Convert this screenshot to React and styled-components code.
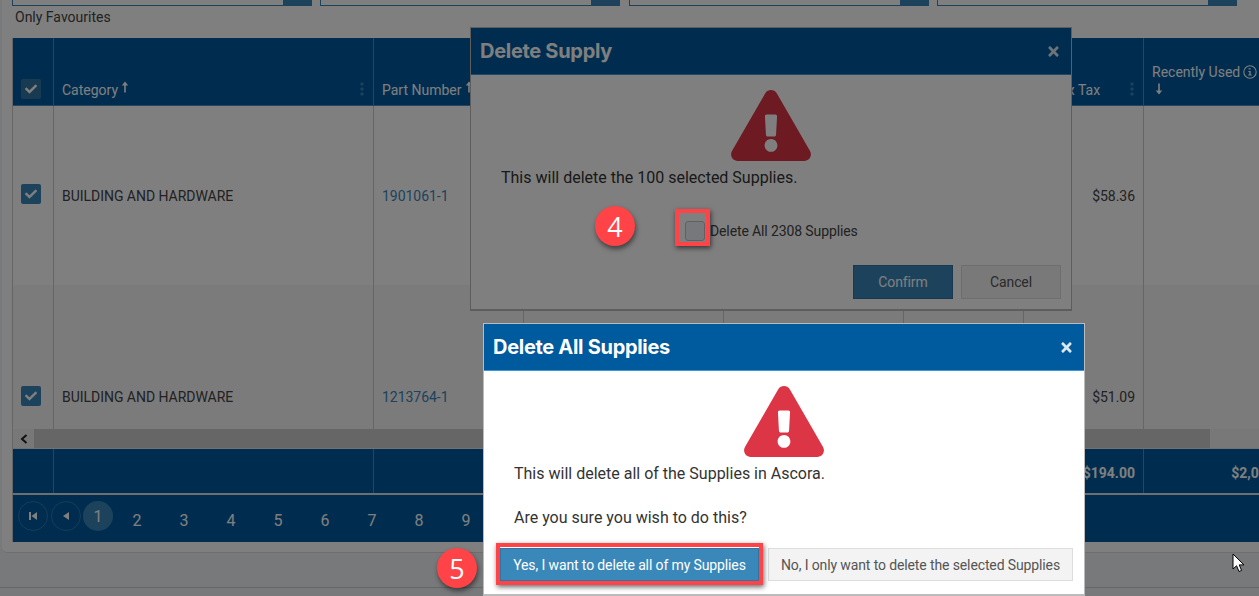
import styled, { createGlobalStyle } from "styled-components";
import { FaExclamationTriangle, FaTimes, FaCheck } from "react-icons/fa";

const COLUMNS = "41px 320px 150px 200px 180px 120px 120px 160px";
const RED = "#ff4346";
const pages = [2, 3, 4, 5, 6, 7, 8, 9];

const GlobalStyle = createGlobalStyle`
  html, body {
    margin: 0;
    padding: 0;
    height: 100%;
    overflow: hidden;
    background: #f0f2f7;
    font-family: Roboto, "Liberation Sans", sans-serif;
    color: #444;
  }
  * { box-sizing: border-box; }
`;

const Stage = styled.div`
  position: relative;
  width: 1259px;
  height: 596px;
  overflow: hidden;
`;

const Panel = styled.main`
  margin-left: 2px;
  height: 553px;
  background: #fff;
  border-bottom: 1px solid #ddd;
  border-bottom-left-radius: 5px;
  padding-left: 10px;
  overflow: hidden;
`;

const BottomBar = styled.div`
  height: 35px;
  border-bottom: 1px solid #ccc;
`;

const Filters = styled.div`
  display: grid;
  grid-template-columns: repeat(4, 1fr);
  gap: 8.33px;
  padding-right: 22px;
  height: 6px;
`;

const FilterInput = styled.div`
  display: flex;
  justify-content: flex-end;
  border: 1px solid #3a87b9;
  border-top: 0;
`;

const FilterButton = styled.div`
  width: 28px;
  background: #3a87b9;
`;

const FavouritesLabel = styled.div`
  font-size: 14px;
  line-height: 20px;
  padding: 1px 0 0 3px;
  height: 32px;
`;

const Table = styled.section`
  border-left: 1px solid #ccc;
  overflow: hidden;
`;

const Row = styled.div`
  display: grid;
  grid-template-columns: ${COLUMNS};
  width: 1291px;
`;

const HeaderRow = styled(Row)`
  height: 68px;
  background: #005a9e;
  border-bottom: 1px solid #4d8dbd;
  color: #fff;
`;

const HeaderCell = styled.div`
  display: flex;
  align-items: flex-end;
  justify-content: space-between;
  padding: 0 8px 6px 8px;
  font-size: 14px;
  line-height: 18px;
  border-right: 1px solid #4d8dbd;
`;

const HeaderLabel = styled.span`
  display: flex;
  align-items: flex-start;
  gap: 3px;
  margin-left: ${({ $shift }) => $shift || 0}px;
`;

const StackedHeader = styled.div`
  display: flex;
  flex-direction: column;
  margin-bottom: 4px;
`;

const RecentlyUsed = styled.span`
  display: flex;
  align-items: center;
  gap: 3px;
  margin-bottom: 2px;
`;

const DownArrow = styled.span`
  padding-left: 3px;
  line-height: 0;
`;

const Body = styled.div`
  height: 323px;
  overflow: hidden;
`;

const BodyRow = styled(Row)`
  height: ${({ $height }) => $height}px;
  background: ${({ $alt }) => ($alt ? "#f6f6f6" : "#fff")};
`;

const Cell = styled.div`
  display: flex;
  align-items: center;
  justify-content: ${({ $right }) => ($right ? "flex-end" : "flex-start")};
  padding: 0 8px;
  font-size: 14px;
  letter-spacing: -0.03px;
  border-right: 1px solid #ccc;
`;

const PartLink = styled.a`
  color: #3a87b9;
`;

const Check = styled.span`
  display: flex;
  align-items: center;
  justify-content: center;
  width: 20px;
  height: 20px;
  border-radius: 2px;
  background: ${({ $faded }) => ($faded ? "#3377a5" : "#3a87b9")};
  color: #fff;
  font-size: 12px;
  margin-bottom: ${({ $faded }) => ($faded ? 0 : 3)}px;
`;

const Scrollbar = styled.div`
  display: flex;
  height: 20px;
  background: #f1f1f1;
  border-bottom: 1px solid #e0e0e0;
`;

const ScrollArrow = styled.div`
  display: flex;
  align-items: center;
  justify-content: center;
  width: 21px;
  color: #222;
`;

const ScrollThumb = styled.div`
  width: 1176px;
  background: #cdcdcd;
`;

const FooterRow = styled(Row)`
  height: 46px;
  background: #005a9e;
  border-bottom: 2px solid #ddd;
  color: #fff;
`;

const FooterCell = styled.div`
  display: flex;
  align-items: center;
  justify-content: flex-end;
  padding: 3px 8px 0;
  font-size: 14px;
  font-weight: 700;
  border-right: 1px solid #4d8dbd;
`;

const Pagination = styled.nav`
  display: flex;
  align-items: flex-start;
  height: 47px;
  width: 1291px;
  padding: 6px 0 0 5px;
  background: #005a9e;
  color: #fff;
`;

const PageCircle = styled.div`
  display: flex;
  align-items: center;
  justify-content: center;
  width: 30px;
  height: 30px;
  margin-right: 2.5px;
  border-radius: 50%;
  font-size: 16px;
  background: ${({ $active }) => ($active ? "#3a87b9" : "transparent")};
  border: ${({ $active }) => ($active ? "0" : "1px solid #2f78ad")};
`;

const PageNumber = styled.div`
  width: 47px;
  text-align: center;
  font-size: 16px;
  line-height: 20px;
  padding-top: 10px;
  margin-left: ${({ $first }) => ($first ? "-2px" : "0")};
`;

const Backdrop = styled.div`
  position: absolute;
  inset: 0;
  background: rgba(0, 0, 0, 0.5);
`;

const Modal = styled.section`
  position: absolute;
  left: ${({ $left }) => $left}px;
  top: ${({ $top }) => $top}px;
  width: 602px;
  height: ${({ $height }) => $height}px;
  display: flex;
  flex-direction: column;
  background: #fff;
  border: 1px solid #bbb;
  border-bottom-width: 2px;
`;

const ModalHeader = styled.header`
  display: flex;
  align-items: center;
  justify-content: space-between;
  flex: 0 0 47px;
  padding: 0 10px 0 9px;
  background: #005a9e;
  border-bottom: 1px solid #3f95d6;
  color: #fff;
`;

const ModalTitle = styled.h2`
  margin: 0;
  font-family: Inter, Roboto, sans-serif;
  font-size: 20px;
  font-weight: 700;
  letter-spacing: -0.3px;
`;

const CloseIcon = styled.span`
  display: flex;
  color: #dbe8f3;
  font-size: 15px;
`;

const WarningIcon = styled.div`
  display: flex;
  justify-content: center;
  margin-top: 15px;
  color: #dc3545;
  line-height: 0;

  svg {
    width: 80px;
    height: 71px;
  }
`;

const Message = styled.p`
  margin: ${({ $gap }) => $gap}px 0 0;
  padding-left: 30px;
  font-size: 16px;
  line-height: 22px;
  color: #333;
`;

const ConfirmAll = styled.label`
  display: flex;
  align-items: center;
  gap: 5px;
  margin: 32px 0 0 214px;
  font-size: 14px;
  line-height: 20px;
  letter-spacing: -0.12px;
`;

const EmptyCheck = styled.span`
  width: 20px;
  height: 20px;
  border: 1px solid #bfc4ca;
  border-radius: 3px;
  background: #eef1f6;
`;

const ModalActions = styled.div`
  display: flex;
  justify-content: ${({ $start }) => ($start ? "flex-start" : "flex-end")};
  gap: ${({ $start }) => ($start ? 9 : 8)}px;
  margin-top: ${({ $gap }) => $gap}px;
  padding: ${({ $start }) => ($start ? "0 0 0 16px" : "0 10px 0 0")};
`;

const ModalButton = styled.button`
  width: ${({ $width }) => $width}px;
  height: ${({ $height }) => $height}px;
  font-family: inherit;
  font-size: 14px;
  letter-spacing: -0.12px;
  color: ${({ $primary }) => ($primary ? "#fff" : "#555")};
  background: ${({ $primary }) => ($primary ? "#3a87b9" : "#f3f3f3")};
  border: 1px solid ${({ $primary }) => ($primary ? "#2f75a3" : "#ddd")};
  padding: 0;
`;

const Badge = styled.div`
  position: absolute;
  left: ${({ $left }) => $left}px;
  top: ${({ $top }) => $top}px;
  display: flex;
  align-items: center;
  justify-content: center;
  width: 40px;
  height: 40px;
  border-radius: 50%;
  background: ${RED};
  color: #fff;
  font-family: "Open Sans", sans-serif;
  font-size: 27px;
  box-shadow: 1px 3px 5px rgba(0, 0, 0, 0.5);
`;

const Highlight = styled.div`
  position: absolute;
  left: ${({ $left }) => $left}px;
  top: ${({ $top }) => $top}px;
  width: ${({ $width }) => $width}px;
  height: ${({ $height }) => $height}px;
  border: 4px solid ${RED};
  box-shadow: 1px 2px 5px rgba(0, 0, 0, 0.6);
`;

const Cursor = styled.svg`
  position: absolute;
  left: 1232px;
  top: 553px;
`;

const SortArrow = ({ down }) => (
  <svg width="8" height="12" viewBox="0 0 8 12" style={{ transform: down ? "rotate(180deg)" : "none" }}>
    <path d="M4 0.5 L7.2 4.5 H4.8 V11.5 H3.2 V4.5 H0.8 Z" fill="currentColor" />
  </svg>
);

const Kebab = () => (
  <svg width="4" height="14" viewBox="0 0 4 14" style={{ marginBottom: 3, marginRight: 1 }}>
    <g fill="#3a87b9">
      <rect x="0.5" y="0.5" width="3" height="3" rx="1" />
      <rect x="0.5" y="5.5" width="3" height="3" rx="1" />
      <rect x="0.5" y="10.5" width="3" height="3" rx="1" />
    </g>
  </svg>
);

const InfoIcon = () => (
  <svg width="14" height="14" viewBox="0 0 14 14">
    <circle cx="7" cy="7" r="6.2" fill="none" stroke="currentColor" strokeWidth="1.1" />
    <path d="M5.6 3.2h2v1.4h-2zM5.4 6h2.3v3.6h1v1H5.2v-1h1.1V7H5.4z" fill="currentColor" />
  </svg>
);

const App = () => {
  return (
    <>
      <GlobalStyle />
      <Stage>
        <Panel>
          <Filters>
            {[0, 1, 2, 3].map((i) => (
              <FilterInput key={i}>
                <FilterButton />
              </FilterInput>
            ))}
          </Filters>
          <FavouritesLabel>Only Favourites</FavouritesLabel>

          <Table>
            <HeaderRow>
              <HeaderCell>
                <Check $faded>
                  <FaCheck />
                </Check>
              </HeaderCell>
              <HeaderCell>
                <HeaderLabel>
                  Category <SortArrow />
                </HeaderLabel>
                <Kebab />
              </HeaderCell>
              <HeaderCell>
                <HeaderLabel>
                  Part Number <SortArrow />
                </HeaderLabel>
              </HeaderCell>
              <HeaderCell />
              <HeaderCell />
              <HeaderCell />
              <HeaderCell>
                <HeaderLabel $shift={-4}>Cost ex Tax</HeaderLabel>
                <Kebab />
              </HeaderCell>
              <HeaderCell>
                <StackedHeader>
                  <RecentlyUsed>
                    Recently Used <InfoIcon />
                  </RecentlyUsed>
                  <DownArrow>
                    <SortArrow down />
                  </DownArrow>
                </StackedHeader>
              </HeaderCell>
            </HeaderRow>

            <Body>
              <BodyRow $height={179}>
                <Cell>
                  <Check>
                    <FaCheck />
                  </Check>
                </Cell>
                <Cell>BUILDING AND HARDWARE</Cell>
                <Cell>
                  <PartLink>1901061-1</PartLink>
                </Cell>
                <Cell />
                <Cell />
                <Cell />
                <Cell $right>$58.36</Cell>
                <Cell />
              </BodyRow>
              <BodyRow $height={224} $alt>
                <Cell>
                  <Check>
                    <FaCheck />
                  </Check>
                </Cell>
                <Cell>BUILDING AND HARDWARE</Cell>
                <Cell>
                  <PartLink>1213764-1</PartLink>
                </Cell>
                <Cell />
                <Cell />
                <Cell />
                <Cell $right>$51.09</Cell>
                <Cell />
              </BodyRow>
            </Body>

            <Scrollbar>
              <ScrollArrow>
                <svg width="8" height="10" viewBox="0 0 8 10">
                  <path d="M6.5 1 L2 5 L6.5 9" fill="none" stroke="currentColor" strokeWidth="2" />
                </svg>
              </ScrollArrow>
              <ScrollThumb />
            </Scrollbar>

            <FooterRow>
              <FooterCell />
              <FooterCell />
              <FooterCell />
              <FooterCell />
              <FooterCell />
              <FooterCell />
              <FooterCell>$194.00</FooterCell>
              <FooterCell>$2,048.00</FooterCell>
            </FooterRow>

            <Pagination>
              <PageCircle>
                <svg width="10" height="10" viewBox="0 0 10 10">
                  <path d="M1 1h2v8H1zM9 1v8L3.5 5z" fill="currentColor" />
                </svg>
              </PageCircle>
              <PageCircle>
                <svg width="8" height="10" viewBox="0 0 8 10">
                  <path d="M7 1v8L1 5z" fill="currentColor" />
                </svg>
              </PageCircle>
              <PageCircle $active>1</PageCircle>
              {pages.map((page, i) => (
                <PageNumber key={page} $first={i === 0}>
                  {page}
                </PageNumber>
              ))}
            </Pagination>
          </Table>
        </Panel>
        <BottomBar />

        <Modal $left={470} $top={27} $height={284}>
          <ModalHeader>
            <ModalTitle>Delete Supply</ModalTitle>
            <CloseIcon>
              <FaTimes />
            </CloseIcon>
          </ModalHeader>
          <WarningIcon>
            <FaExclamationTriangle />
          </WarningIcon>
          <Message $gap={6}>This will delete the 100 selected Supplies.</Message>
          <ConfirmAll>
            <EmptyCheck />
            Delete All 2308 Supplies
          </ConfirmAll>
          <ModalActions $gap={24}>
            <ModalButton $primary $width={100} $height={34}>
              Confirm
            </ModalButton>
            <ModalButton $width={100} $height={34}>
              Cancel
            </ModalButton>
          </ModalActions>
        </Modal>

        <Backdrop />

        <Modal $left={483} $top={323} $height={273}>
          <ModalHeader>
            <ModalTitle>Delete All Supplies</ModalTitle>
            <CloseIcon>
              <FaTimes />
            </CloseIcon>
          </ModalHeader>
          <WarningIcon>
            <FaExclamationTriangle />
          </WarningIcon>
          <Message $gap={6}>This will delete all of the Supplies in Ascora.</Message>
          <Message $gap={22}>Are you sure you wish to do this?</Message>
          <ModalActions $start $gap={19}>
            <ModalButton $primary $width={259} $height={33}>
              Yes, I want to delete all of my Supplies
            </ModalButton>
            <ModalButton $width={305} $height={33}>
              No, I only want to delete the selected Supplies
            </ModalButton>
          </ModalActions>
        </Modal>

        <Highlight $left={675} $top={209} $width={35} $height={37} />
        <Badge $left={595} $top={206}>4</Badge>
        <Highlight $left={496} $top={543} $width={267} $height={42} />
        <Badge $left={437} $top={548}>5</Badge>

        <Cursor width="14" height="20" viewBox="0 0 14 20">
          <path d="M1 1 V16 L4.6 12.8 L7 18.5 L9.6 17.4 L7.2 11.9 H12 Z" fill="#fff" stroke="#000" strokeWidth="1" />
        </Cursor>
      </Stage>
    </>
  );
};

export default App;
